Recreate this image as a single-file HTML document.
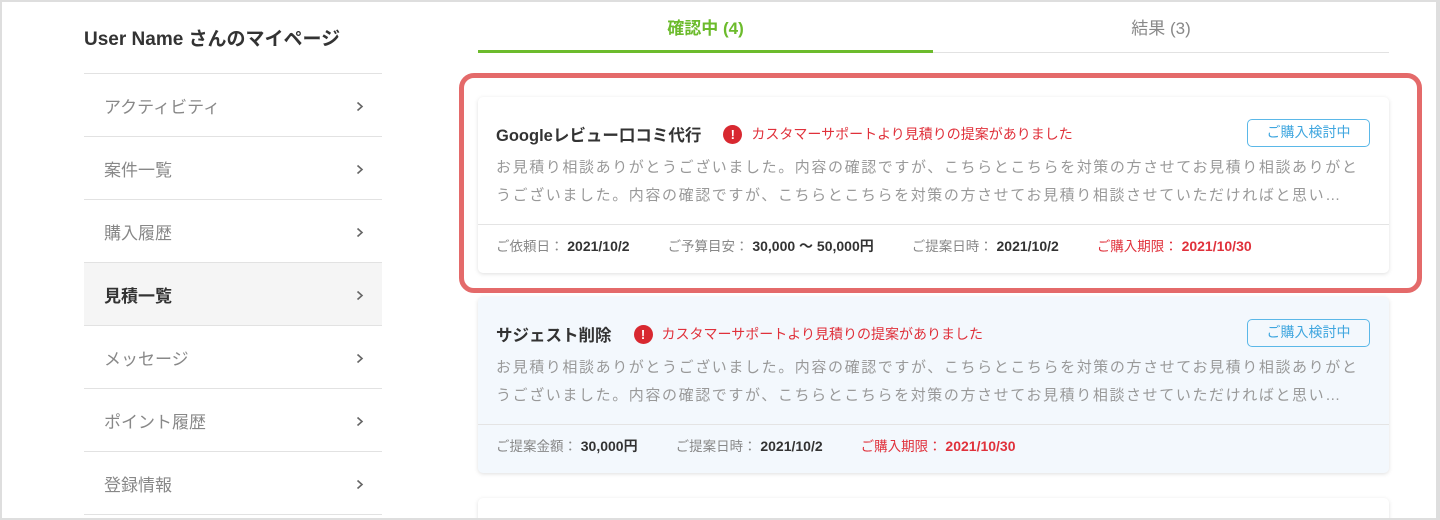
<!DOCTYPE html>
<html><head><meta charset="utf-8"><style>
*{box-sizing:border-box;margin:0;padding:0}
html,body{width:1440px;height:520px;overflow:hidden}
body{background:#fff;font-family:"Liberation Sans","Noto Sans CJK JP",sans-serif;position:relative}
.frame{position:absolute;left:0;top:0;width:1440px;height:520px;border:2px solid #dedede;border-right-width:4px;z-index:5;pointer-events:none}
.abs{position:absolute}
.side-title{left:84px;top:24px;font-size:19px;font-weight:bold;color:#333;white-space:nowrap}
.nav{left:84px;top:73px;width:298px}
.nav div{height:63px;border-top:1px solid #e2e2e2;display:flex;align-items:center;padding-left:20px;font-size:17px;color:#888;position:relative}
.nav div:last-child{border-bottom:1px solid #e2e2e2;height:64px}
.nav div.act{background:#f5f5f5;color:#333;font-weight:bold}
.nav div svg{position:absolute;left:272px;top:27px}
.tab{top:14px;font-size:17px;text-align:center}
.card{left:478px;width:911px;height:176px;border-radius:5px;box-shadow:0 1px 4px rgba(0,0,0,.13);background:#fff}
.card .t{position:absolute;left:18px;top:25px;font-size:16.5px;font-weight:bold;color:#333;white-space:nowrap;display:flex;align-items:center}
.card .w{color:#e0313b;font-weight:normal;font-size:14px;display:flex;align-items:center;margin-left:22px}
.card .w i{display:inline-block;width:19px;height:19px;border-radius:50%;background:#d82830;color:#fff;font-style:normal;font-weight:bold;font-size:13px;text-align:center;line-height:19px;margin-right:9px}
.card .d{position:absolute;left:18px;top:57px;font-size:15px;line-height:28px;color:#999;letter-spacing:1.6px;white-space:nowrap}
.card .hr{position:absolute;left:0;right:0;top:127px;border-top:1px solid #e4e4e4}
.card .f{position:absolute;left:18px;top:138px;font-size:13.5px;color:#888;white-space:nowrap}
.card .f b{color:#333;margin-right:38px;font-size:14px}
.card .f .r,.card .f .r b{color:#e0313b}
.btn{position:absolute;left:769px;top:22px;width:123px;height:28px;border:1.5px solid #5bb8e8;border-radius:5px;color:#3fa6df;font-size:14px;text-align:center;line-height:25px}
</style></head><body>
<div class="frame"></div>
<div class="abs side-title">User Name さんのマイページ</div>
<div class="abs nav">
<div>アクティビティ<svg width="8" height="11"><path d="M1.5 1.5 L6 5.5 L1.5 9.5" stroke="#666" stroke-width="1.6" fill="none"/></svg></div>
<div>案件一覧<svg width="8" height="11"><path d="M1.5 1.5 L6 5.5 L1.5 9.5" stroke="#666" stroke-width="1.6" fill="none"/></svg></div>
<div>購入履歴<svg width="8" height="11"><path d="M1.5 1.5 L6 5.5 L1.5 9.5" stroke="#666" stroke-width="1.6" fill="none"/></svg></div>
<div class="act">見積一覧<svg width="8" height="11"><path d="M1.5 1.5 L6 5.5 L1.5 9.5" stroke="#666" stroke-width="1.6" fill="none"/></svg></div>
<div>メッセージ<svg width="8" height="11"><path d="M1.5 1.5 L6 5.5 L1.5 9.5" stroke="#666" stroke-width="1.6" fill="none"/></svg></div>
<div>ポイント履歴<svg width="8" height="11"><path d="M1.5 1.5 L6 5.5 L1.5 9.5" stroke="#666" stroke-width="1.6" fill="none"/></svg></div>
<div>登録情報<svg width="8" height="11"><path d="M1.5 1.5 L6 5.5 L1.5 9.5" stroke="#666" stroke-width="1.6" fill="none"/></svg></div>
</div>
<div class="abs tab" style="left:478px;width:455px;color:#6cbb2c;font-weight:bold">確認中 (4)</div>
<div class="abs tab" style="left:933px;width:456px;color:#888">結果 (3)</div>
<div class="abs" style="left:478px;top:50px;width:455px;height:3px;background:#6cbb2c"></div>
<div class="abs" style="left:933px;top:52px;width:456px;height:1px;background:#e2e2e2"></div>

<div class="abs" style="left:459px;top:73px;width:963px;height:220px;border:5px solid #e46a6a;border-radius:15px;z-index:2"></div>

<div class="abs card" style="top:97px">
<div class="t">Googleレビュー口コミ代行<span class="w"><i>!</i>カスタマーサポートより見積りの提案がありました</span></div>
<div class="btn">ご購入検討中</div>
<div class="d">お見積り相談ありがとうございました。内容の確認ですが、こちらとこちらを対策の方させてお見積り相談ありがと<br>うございました。内容の確認ですが、こちらとこちらを対策の方させてお見積り相談させていただければと思い…</div>
<div class="hr"></div>
<div class="f">ご依頼日： <b>2021/10/2</b>ご予算目安： <b>30,000 ～ 50,000円</b>ご提案日時： <b>2021/10/2</b><span class="r">ご購入期限： <b>2021/10/30</b></span></div>
</div>

<div class="abs card" style="top:297px;background:#f3f8fd">
<div class="t">サジェスト削除<span class="w"><i>!</i>カスタマーサポートより見積りの提案がありました</span></div>
<div class="btn">ご購入検討中</div>
<div class="d">お見積り相談ありがとうございました。内容の確認ですが、こちらとこちらを対策の方させてお見積り相談ありがと<br>うございました。内容の確認ですが、こちらとこちらを対策の方させてお見積り相談させていただければと思い…</div>
<div class="hr"></div>
<div class="f">ご提案金額： <b>30,000円</b>ご提案日時： <b>2021/10/2</b><span class="r">ご購入期限： <b>2021/10/30</b></span></div>
</div>

<div class="abs card" style="top:498px;height:22px;border-radius:5px 5px 0 0"></div>
</body></html>
